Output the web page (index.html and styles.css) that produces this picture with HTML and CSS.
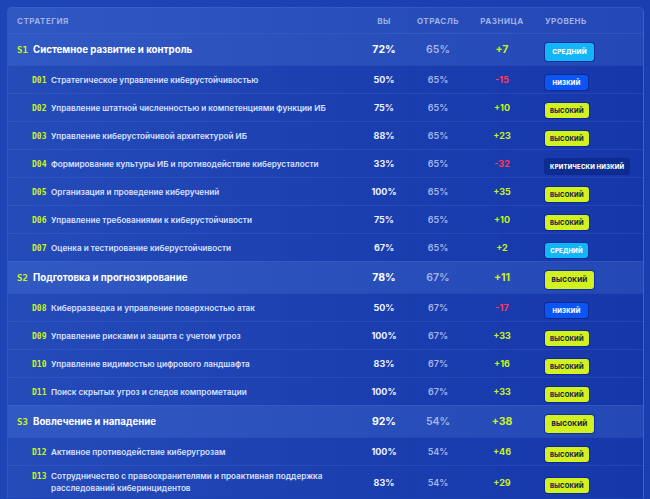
FILE: index.html
```html
<!DOCTYPE html>
<html lang="ru">
<head>
<meta charset="utf-8">
<title>Стратегии</title>
<link rel="stylesheet" href="styles.css">
</head>
<body>
<div class="panel">
  <div class="row head">
    <div class="c-name">Стратегия</div>
    <div class="c-num">Вы</div>
    <div class="c-num">Отрасль</div>
    <div class="c-num">Разница</div>
    <div class="c-lvl">Уровень</div>
  </div>

  <div class="row s">
    <div class="c-name"><span class="code">S1</span><span class="nm">Системное развитие и контроль</span></div>
    <div class="c-num you">72%</div><div class="c-num ind">65%</div><div class="c-num diff pos">+7</div>
    <div class="c-lvl"><span class="badge mid">Средний</span></div>
  </div>
  <div class="row d">
    <div class="c-name"><span class="code">D01</span><span class="nm">Стратегическое управление киберустойчивостью</span></div>
    <div class="c-num you">50%</div><div class="c-num ind">65%</div><div class="c-num diff neg">-15</div>
    <div class="c-lvl"><span class="badge low">Низкий</span></div>
  </div>
  <div class="row d">
    <div class="c-name"><span class="code">D02</span><span class="nm">Управление штатной численностью и компетенциями функции ИБ</span></div>
    <div class="c-num you">75%</div><div class="c-num ind">65%</div><div class="c-num diff pos">+10</div>
    <div class="c-lvl"><span class="badge high">Высокий</span></div>
  </div>
  <div class="row d">
    <div class="c-name"><span class="code">D03</span><span class="nm">Управление киберустойчивой архитектурой ИБ</span></div>
    <div class="c-num you">88%</div><div class="c-num ind">65%</div><div class="c-num diff pos">+23</div>
    <div class="c-lvl"><span class="badge high">Высокий</span></div>
  </div>
  <div class="row d">
    <div class="c-name"><span class="code">D04</span><span class="nm">Формирование культуры ИБ и противодействие киберусталости</span></div>
    <div class="c-num you">33%</div><div class="c-num ind">65%</div><div class="c-num diff neg">-32</div>
    <div class="c-lvl"><span class="badge crit">Критически низкий</span></div>
  </div>
  <div class="row d">
    <div class="c-name"><span class="code">D05</span><span class="nm">Организация и проведение киберучений</span></div>
    <div class="c-num you">100%</div><div class="c-num ind">65%</div><div class="c-num diff pos">+35</div>
    <div class="c-lvl"><span class="badge high">Высокий</span></div>
  </div>
  <div class="row d">
    <div class="c-name"><span class="code">D06</span><span class="nm">Управление требованиями к киберустойчивости</span></div>
    <div class="c-num you">75%</div><div class="c-num ind">65%</div><div class="c-num diff pos">+10</div>
    <div class="c-lvl"><span class="badge high">Высокий</span></div>
  </div>
  <div class="row d">
    <div class="c-name"><span class="code">D07</span><span class="nm">Оценка и тестирование киберустойчивости</span></div>
    <div class="c-num you">67%</div><div class="c-num ind">65%</div><div class="c-num diff pos">+2</div>
    <div class="c-lvl"><span class="badge mid">Средний</span></div>
  </div>

  <div class="row s">
    <div class="c-name"><span class="code">S2</span><span class="nm">Подготовка и прогнозирование</span></div>
    <div class="c-num you">78%</div><div class="c-num ind">67%</div><div class="c-num diff pos">+11</div>
    <div class="c-lvl"><span class="badge high">Высокий</span></div>
  </div>
  <div class="row d">
    <div class="c-name"><span class="code">D08</span><span class="nm">Киберразведка и управление поверхностью атак</span></div>
    <div class="c-num you">50%</div><div class="c-num ind">67%</div><div class="c-num diff neg">-17</div>
    <div class="c-lvl"><span class="badge low">Низкий</span></div>
  </div>
  <div class="row d">
    <div class="c-name"><span class="code">D09</span><span class="nm">Управление рисками и защита с учетом угроз</span></div>
    <div class="c-num you">100%</div><div class="c-num ind">67%</div><div class="c-num diff pos">+33</div>
    <div class="c-lvl"><span class="badge high">Высокий</span></div>
  </div>
  <div class="row d">
    <div class="c-name"><span class="code">D10</span><span class="nm">Управление видимостью цифрового ландшафта</span></div>
    <div class="c-num you">83%</div><div class="c-num ind">67%</div><div class="c-num diff pos">+16</div>
    <div class="c-lvl"><span class="badge high">Высокий</span></div>
  </div>
  <div class="row d">
    <div class="c-name"><span class="code">D11</span><span class="nm">Поиск скрытых угроз и следов компрометации</span></div>
    <div class="c-num you">100%</div><div class="c-num ind">67%</div><div class="c-num diff pos">+33</div>
    <div class="c-lvl"><span class="badge high">Высокий</span></div>
  </div>

  <div class="row s">
    <div class="c-name"><span class="code">S3</span><span class="nm">Вовлечение и нападение</span></div>
    <div class="c-num you">92%</div><div class="c-num ind">54%</div><div class="c-num diff pos">+38</div>
    <div class="c-lvl"><span class="badge high">Высокий</span></div>
  </div>
  <div class="row d">
    <div class="c-name"><span class="code">D12</span><span class="nm">Активное противодействие киберугрозам</span></div>
    <div class="c-num you">100%</div><div class="c-num ind">54%</div><div class="c-num diff pos">+46</div>
    <div class="c-lvl"><span class="badge high">Высокий</span></div>
  </div>
  <div class="row d">
    <div class="c-name"><span class="code">D13</span><span class="nm">Сотрудничество с правоохранителями и проактивная поддержка расследований киберинцидентов</span></div>
    <div class="c-num you">83%</div><div class="c-num ind">54%</div><div class="c-num diff pos">+29</div>
    <div class="c-lvl"><span class="badge high">Высокий</span></div>
  </div>
</div>
</body>
</html>
```
FILE: styles.css
```css
html, body {
  margin: 0;
  padding: 0;
}
body {
  background: linear-gradient(90deg, #1e45b6 0%, #1a3db0 100%);
  font-family: Inter, "Noto Sans", "DejaVu Sans", sans-serif;
  padding: 7px 6px 0 7px;
  height: 499px;
  box-sizing: border-box;
  overflow: hidden;
}
.panel {
  background: linear-gradient(90deg, #2a53c1 0%, #2249b9 55%, #1d43b5 100%);
  border-radius: 5px 5px 0 0;
  border: 1px solid rgba(110, 140, 230, 0.25);
  border-bottom: none;
  overflow: hidden;
}
.row {
  display: grid;
  grid-template-columns: 1fr 50px 58px 70px 96px;
  align-items: center;
  padding: 0 10px 0 9px;
  border-top: 1px solid rgba(120, 150, 235, 0.14);
}
.row.head {
  height: 25px;
  border-top: none;
  background: rgba(255, 255, 255, 0.03);
  font-size: 8px;
  font-weight: 700;
  letter-spacing: 0.5px;
  text-transform: uppercase;
  color: #9fb1e3;
}
.row.s {
  height: 31px;
  background: rgba(255, 255, 255, 0.035);
}
.row.d {
  min-height: 27px;
  background: linear-gradient(90deg, rgba(0, 20, 130, 0.12), rgba(0, 20, 140, 0.25));
}
.c-num {
  text-align: center;
}
.c-lvl {
  padding-left: 8px;
}
.c-name {
  display: flex;
  align-items: baseline;
  padding-right: 22px;
}
.code {
  font-family: "DejaVu Sans Mono", monospace;
  font-weight: 700;
  color: #c9f21c;
  flex: none;
}
.s .code {
  font-size: 9px;
  width: 16px;
}
.s .nm {
  font-size: 9.7px;
  font-weight: 700;
  color: #ffffff;
}
.d .c-name {
  padding-left: 15px;
  padding-top: 4px;
  padding-bottom: 4px;
}
.d .code {
  font-size: 8px;
  width: 19px;
}
.d .nm {
  font-size: 8.2px;
  font-weight: 600;
  color: #d9e1ff;
  line-height: 12px;
}
.you {
  font-weight: 700;
  color: #ffffff;
}
.s .you, .s .ind, .s .diff { font-size: 10.5px; }
.d .you, .d .ind, .d .diff { font-size: 9px; }
.d .you { color: #eef1ff; }
.ind {
  font-weight: 600;
  color: #a4b5ea;
}
.diff {
  font-weight: 700;
}
.pos { color: #c9f21c; }
.neg { color: #ff3d4f; }
.badge {
  display: inline-block;
  text-transform: uppercase;
  font-weight: 800;
  border-radius: 3px;
  text-align: center;
  letter-spacing: 0.2px;
  box-shadow: 0 0 0 1px rgba(10, 30, 140, 0.6);
}
.s .badge {
  font-size: 6.4px;
  min-width: 49px;
  height: 18px;
  line-height: 18px;
  padding: 0 4px;
  box-sizing: border-box;
}
.d .badge {
  font-size: 6px;
  min-width: 43px;
  height: 15px;
  line-height: 15px;
  padding: 0 5px;
  box-sizing: border-box;
}
.mid { background: #12b6f7; color: #ffffff; }
.low { background: #0b56f2; color: #ffffff; }
.crit { background: #0c2c8e; color: #ffffff; }
.high { background: #d2f21f; color: #1c2644; }
```
